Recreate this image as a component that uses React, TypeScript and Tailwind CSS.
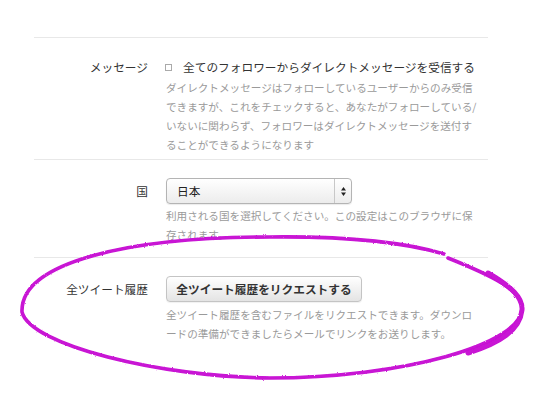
import React from "react";

const jp = "font-['Hiragino_Kaku_Gothic_Pro','Noto_Sans_CJK_JP',sans-serif]";

function Row({
  label,
  children,
  className,
  labelClass,
}: {
  label: string;
  children: React.ReactNode;
  className?: string;
  labelClass?: string;
}) {
  return (
    <div
      className={`grid grid-cols-[114px_322px] gap-x-[18px] border-t border-[#e8e8e8] ${className ?? ""}`}
    >
      <div className={`text-right text-[11.7px] text-[#333] whitespace-nowrap ${labelClass ?? ""}`}>
        {label}
      </div>
      <div>{children}</div>
    </div>
  );
}

function Help({ lines, className }: { lines: string[]; className?: string }) {
  return (
    <p className={`text-[10.6px] leading-[19px] text-[#9a9a9a] whitespace-nowrap ${className ?? ""}`}>
      {lines.map((l, i) => (
        <span key={i} className="block">
          {l}
        </span>
      ))}
    </p>
  );
}

function Scribble() {
  // hand-drawn marker ellipse laid over the last row
  const d =
    "M448 258 C493 276 521 290 522 307 C524 345 400 378 270 378 C160 377 30 345 22 312 C20 262 130 237 270 237 C360 236 410 244 444 254";
  return (
    <svg
      className="absolute inset-0 pointer-events-none"
      width="540"
      height="400"
      viewBox="0 0 540 400"
    >
      <defs>
        <filter id="rough" x="-5%" y="-5%" width="110%" height="110%">
          <feTurbulence type="fractalNoise" baseFrequency="1.1" numOctaves="2" seed="5" result="n" />
          <feDisplacementMap in="SourceGraphic" in2="n" scale="2" xChannelSelector="R" yChannelSelector="G" />
        </filter>
      </defs>
      <g filter="url(#rough)" fill="none" stroke="#c812d4" strokeLinecap="round">
        <path d={d} strokeWidth="3.6" />
        <path d="M488 273 C512 287 523 298 522 310 C520 330 500 343 468 353" strokeWidth="5" />
      </g>
    </svg>
  );
}

export default function App() {
  return (
    <div className={`relative w-[540px] h-[400px] overflow-hidden bg-white ${jp}`}>
      <div className="ml-[34px] w-[454px] pt-[37px]">
        <Row label="メッセージ" className="pt-[20px] pb-[5px]" labelClass="leading-[18px]">
          <label className="flex items-center text-[11.7px] leading-[18px] text-[#333] whitespace-nowrap">
            <span className="ml-[-1px] mr-[11px] inline-block h-[7px] w-[7px] border border-[#aaa] bg-white" />
            全てのフォロワーからダイレクトメッセージを受信する
          </label>
          <Help
            className="mt-[2px]"
            lines={[
              "ダイレクトメッセージはフォローしているユーザーからのみ受信",
              "できますが、これをチェックすると、あなたがフォローしている/",
              "いないに関わらず、フォロワーはダイレクトメッセージを送付す",
              "ることができるようになります",
            ]}
          />
        </Row>

        <Row label="国" className="pt-[18px] pb-[13px]" labelClass="leading-[26px]">
          <div className="flex h-[26px] w-[186px] items-center rounded-[4px] border border-[#b4b4b4] bg-gradient-to-b from-white to-[#ececec] shadow-[0_1px_1px_rgba(0,0,0,0.08)]">
            <span className="flex-1 pl-[10px] text-[11.7px] text-[#222]">日本</span>
            <span className="flex h-full w-[17px] items-center justify-center border-l border-[#c8c8c8]">
              <svg width="5" height="9" viewBox="0 0 5 9">
                <path d="M2.5 0 L5 3.4 L0 3.4 Z" fill="#222" />
                <path d="M0 5.6 L5 5.6 L2.5 9 Z" fill="#222" />
              </svg>
            </span>
          </div>
          <Help
            className="mt-[2px]"
            lines={[
              "利用される国を選択してください。この設定はこのブラウザに保",
              "存されます。",
            ]}
          />
        </Row>

        <Row label="全ツイート履歴" className="pt-[18px] pb-[20px]" labelClass="leading-[26px]">
          <button className="flex h-[26px] w-[196px] items-center justify-center rounded-[4px] border border-[#c4c4c4] bg-gradient-to-b from-white to-[#e4e4e4] text-[11.7px] font-bold text-[#333] whitespace-nowrap shadow-[0_1px_1px_rgba(0,0,0,0.06)]">
            全ツイート履歴をリクエストする
          </button>
          <Help
            className="mt-[3px]"
            lines={[
              "全ツイート履歴を含むファイルをリクエストできます。ダウンロ",
              "ードの準備ができましたらメールでリンクをお送りします。",
            ]}
          />
        </Row>
      </div>
      <Scribble />
    </div>
  );
}
